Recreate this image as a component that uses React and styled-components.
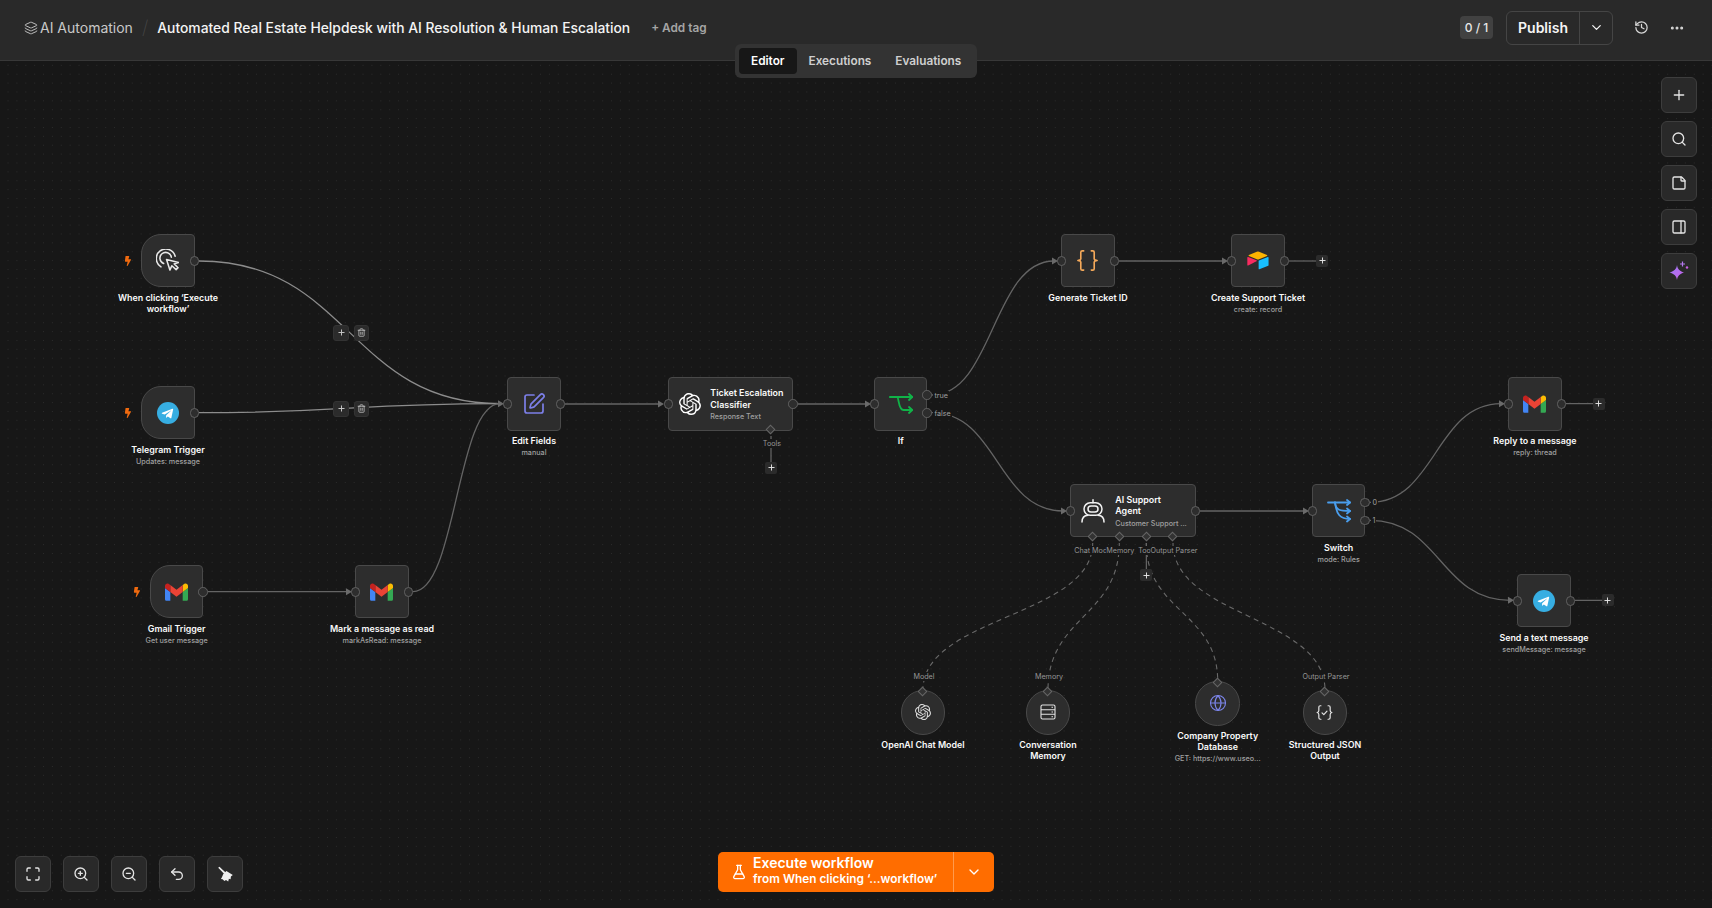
import React from "react";
import styled, { createGlobalStyle } from "styled-components";
import {
    ChevronDown, Ellipsis, FlaskConical, Globe, History, Layers, Maximize, PanelRight,
    Plus, Search, SquarePen, StickyNote, Trash2, Undo2, ZoomIn, ZoomOut,
} from "lucide-react";
import { FaBolt } from "react-icons/fa";
import { SiOpenai } from "react-icons/si";

const GlobalStyle = createGlobalStyle`
    html, body {
        margin: 0;
        height: 100%;
        background: #171717;
        font-family: Inter, "Noto Sans", sans-serif;
    }
    * { box-sizing: border-box; }
`;

const Page = styled.div`
    position: relative;
    display: flex;
    flex-direction: column;
    width: 100%;
    height: 100vh;
    overflow: hidden;
`;

/* top bar */
const Header = styled.header`
    display: flex;
    align-items: center;
    flex-shrink: 0;
    height: 61px;
    padding: 0 27px 5px 24px;
    background: #292929;
    border-bottom: 1px solid #383838;
`;

const Crumb = styled.div`
    display: flex;
    align-items: center;
    gap: 2px;
    color: #c8c8c8;
    font-size: 14px;
`;

const Slash = styled.span`
    margin: 0 9px 0 9px;
    color: #454545;
    font-size: 19px;
    font-weight: 200;
`;

const Title = styled.div`
    color: #f4f4f4;
    font-size: 13.85px;
    font-weight: 500;
    white-space: nowrap;
`;

const AddTag = styled.div`
    margin-left: 21px;
    color: #a5a5a5;
    font-size: 11.8px;
    font-weight: 600;
`;

const HeaderRight = styled.div`
    display: flex;
    align-items: center;
    margin-left: auto;
`;

const Counter = styled.div`
    display: flex;
    align-items: center;
    justify-content: center;
    width: 33px;
    height: 23px;
    margin-right: 13px;
    background: #414141;
    border-radius: 4px;
    color: #e8e8e8;
    font-size: 12px;
    font-weight: 500;
`;

const PublishGroup = styled.div`
    display: flex;
    height: 34px;
    margin-right: 20px;
    border: 1px solid #454545;
    border-radius: 6px;
    color: #f5f5f5;
`;

const PublishButton = styled.div`
    display: flex;
    align-items: center;
    justify-content: center;
    width: 73px;
    border-right: 1px solid #454545;
    font-size: 14px;
    font-weight: 600;
`;

const PublishArrow = styled.div`
    display: flex;
    align-items: center;
    justify-content: center;
    width: 32px;
`;

const HeaderIcon = styled.div`
    display: flex;
    justify-content: center;
    width: 16px;
    margin-left: ${({$gap}) => `${$gap}px`};
    color: #d8d8d8;
`;

const Tabs = styled.nav`
    position: absolute;
    top: 44px;
    left: 735px;
    z-index: 5;
    display: flex;
    height: 34px;
    padding: 4px;
    background: #333333;
    border-radius: 6px;
`;

const Tab = styled.div`
    display: flex;
    align-items: center;
    padding: 0 12px;
    border-radius: 4px;
    background: ${({$active}) => ($active ? "#171717" : "transparent")};
    color: ${({$active}) => ($active ? "#ffffff" : "#cfcfcf")};
    font-size: 11.8px;
    font-weight: 600;
`;

/* canvas */
const Canvas = styled.main`
    flex: 1;
    background-color: #171717;
    background-image: radial-gradient(circle, #2b2b2b 0.7px, transparent 0.9px);
    background-size: 8.89px 8.89px;
    background-position: 3.6px -0.1px;
`;

const Graph = styled.div`
    position: absolute;
    inset: 0;
`;

const Wires = styled.svg`
    position: absolute;
    top: 0;
    left: 0;
`;

const NodeWrap = styled.div`
    position: absolute;
    left: ${({$x}) => `${$x}px`};
    top: ${({$y}) => `${$y}px`};
    display: flex;
    align-items: center;
    width: ${({$w}) => `${$w}px`};
    height: ${({$h}) => `${$h}px`};
    background: #2d2d2d;
    border: 1px solid #494949;
    border-radius: ${({$kind}) =>
        $kind === "trigger" ? "20px 4px 4px 20px" : $kind === "config" ? "50%" : "4px"};
    justify-content: ${({$kind}) => ($kind === "wide" ? "flex-start" : "center")};
    padding-left: ${({$kind}) => ($kind === "wide" ? "10px" : "0")};
    color: #ececec;
`;

const WideText = styled.div`
    display: flex;
    flex-direction: column;
    margin-left: ${({$gap}) => `${$gap}px`};
    padding-top: 2px;
    width: ${({$w}) => `${$w}px`};
    color: #fafafa;
    font-size: 8.9px;
    font-weight: 600;
    line-height: 11.5px;
    & > span {
        margin-top: 1px;
        color: #a0a0a0;
        font-size: 7.2px;
        font-weight: 500;
        white-space: nowrap;
    }
`;

const Label = styled.div`
    position: absolute;
    top: calc(100% + ${({$gap}) => `${$gap}px`});
    left: 50%;
    width: ${({$w}) => `${$w}px`};
    transform: translateX(-50%);
    color: #fafafa;
    font-size: 8.9px;
    font-weight: 600;
    line-height: 11px;
    text-align: center;
    & > span {
        display: block;
        margin-top: 1px;
        color: #a0a0a0;
        font-size: 7.2px;
        font-weight: 500;
        white-space: nowrap;
    }
`;

const Port = styled.div`
    position: absolute;
    top: ${({$top}) => `${$top}px`};
    ${({$side}) => $side}: -5.5px;
    width: 9.5px;
    height: 9.5px;
    margin-top: -5.5px;
    background: #2d2d2d;
    border: 1px solid #626262;
    border-radius: 50%;
`;

const PortText = styled.div`
    position: absolute;
    top: ${({$top}) => `${$top}px`};
    left: calc(100% + 7px);
    margin-top: -5px;
    padding: 0 1px;
    background: #171717;
    color: #a0a0a0;
    font-size: 7.2px;
    line-height: 9px;
`;

const Diamond = styled.div`
    position: absolute;
    left: ${({$left}) => `${$left}px`};
    top: ${({$top}) => $top};
    width: 7px;
    height: 7px;
    margin: -3.5px 0 0 -4.5px;
    background: #333333;
    border: 1px solid #666666;
    transform: rotate(45deg);
`;

const SlotText = styled.div`
    position: absolute;
    left: ${({$left}) => `${$left}px`};
    top: ${({$top}) => `${$top}px`};
    transform: translateX(-50%);
    background: #171717;
    color: #969696;
    font-size: 7.2px;
    line-height: 9px;
    white-space: nowrap;
`;

const Bolt = styled.div`
    position: absolute;
    top: 50%;
    left: -19px;
    display: flex;
    margin-top: -5px;
    color: #f06a0f;
`;

const AddStub = styled.div`
    position: absolute;
    left: ${({$x}) => `${$x}px`};
    top: ${({$y}) => `${$y}px`};
    display: flex;
    align-items: center;
    justify-content: center;
    width: 12px;
    height: 12px;
    background: #2b2b2b;
    border-radius: 2px;
    color: #e6e6e6;
`;

const EdgeTools = styled.div`
    position: absolute;
    left: ${({$x}) => `${$x}px`};
    top: ${({$y}) => `${$y}px`};
    display: flex;
    gap: 5px;
`;

const EdgeTool = styled.div`
    display: flex;
    align-items: center;
    justify-content: center;
    width: 15.5px;
    height: 15.5px;
    background: #2b2b2b;
    border: 1px solid #333333;
    border-radius: 3px;
    color: #cccccc;
`;

/* overlay controls */
const SideTools = styled.aside`
    position: absolute;
    top: 77px;
    right: 15px;
    display: flex;
    flex-direction: column;
    gap: 8px;
`;

const BottomTools = styled.div`
    position: absolute;
    left: 15px;
    bottom: 16px;
    display: flex;
    gap: 12px;
`;

const ToolButton = styled.div`
    display: flex;
    align-items: center;
    justify-content: center;
    width: 36px;
    height: 36px;
    background: #292929;
    border: 1px solid #3d3d3d;
    border-radius: 6px;
    color: #e4e4e4;
`;

const ExecuteBar = styled.div`
    position: absolute;
    left: 718px;
    bottom: 16px;
    display: flex;
    width: 276px;
    height: 40px;
    background: #ff6d00;
    border-radius: 5px;
    color: #ffffff;
`;

const ExecuteMain = styled.div`
    display: flex;
    align-items: center;
    flex: 1;
    gap: 6px;
    padding-left: 13px;
    border-right: 1px solid #ff9a4d;
`;

const ExecuteText = styled.div`
    display: flex;
    flex-direction: column;
    padding-bottom: 3px;
    font-size: 14px;
    font-weight: 600;
    line-height: 17px;
    & > span {
        font-size: 11.85px;
        font-weight: 600;
        line-height: 16px;
    }
`;

const ExecuteArrow = styled.div`
    display: flex;
    align-items: center;
    justify-content: center;
    width: 40px;
`;

/* drawn icons */
function GmailIcon() {
    return (
        <svg width="23" height="18" viewBox="0 0 52 40">
            <path fill="#4285f4" d="M3.6 40h8.4V20L0 11v25.4C0 38.4 1.6 40 3.6 40" />
            <path fill="#34a853" d="M40 40h8.4c2 0 3.6-1.6 3.6-3.6V11L40 20" />
            <path fill="#fbbc04" d="M40 4.4V20l12-9V6.2c0-4.5-5.1-7-8.6-4.4" />
            <path fill="#ea4335" d="M12 20V4.4L26 15 40 4.4V20L26 30.5" />
            <path fill="#c5221f" d="M0 6.2V11l12 9V4.4L8.6 1.8C5.1-.8 0 1.7 0 6.2" />
        </svg>
    );
}

function TelegramIcon() {
    return (
        <svg width="22" height="22" viewBox="0 0 24 24">
            <circle cx="12" cy="12" r="12" fill="#37aee2" />
            <path
                fill="#ffffff"
                d="M5.5 11.8 16.8 7.4c.5-.2 1 .1.8.9l-1.9 9c-.1.6-.5.8-1 .5l-2.9-2.1-1.4 1.3c-.2.2-.3.3-.6.3l.2-2.9 5.3-4.8c.2-.2 0-.3-.3-.1l-6.6 4.1-2.8-.9c-.6-.2-.6-.6.1-.9z"
            />
        </svg>
    );
}

function CursorIcon() {
    return (
        <svg width="23" height="23" viewBox="0 0 24 24" fill="none" stroke="#e8e8e8" strokeWidth="1.6" strokeLinecap="round" strokeLinejoin="round">
            <path d="M5.2 18.6A10 10 0 1 1 20 7.5" />
            <path d="M8 15.2A6 6 0 1 1 16 8.5" />
            <path d="M11 11l3.5 11 2-4.5 4.5 4 2-2-4-4 4.5-1.5z" />
        </svg>
    );
}

function IfIcon() {
    return (
        <svg width="24" height="24" viewBox="0 0 24 24" fill="none" stroke="#10b348" strokeWidth="1.8" strokeLinecap="round" strokeLinejoin="round">
            <path d="M.8 5H23" />
            <path d="M20 2l3.2 3-3.2 3" />
            <path d="M8 5c2 0 1.2 13 6.5 13H23" />
            <path d="M20 15l3.2 3-3.2 3" />
        </svg>
    );
}

function SwitchIcon() {
    return (
        <svg width="24" height="24" viewBox="0 0 24 24" fill="none" stroke="#4a9eed" strokeWidth="1.8" strokeLinecap="round" strokeLinejoin="round">
            <path d="M1 3.5H23" />
            <path d="M20 1l3 2.5-3 2.5" />
            <path d="M8 3.5c1 8 5 8.500 15 8.500" />
            <path d="M20 9.500l3 2.500-3 2.500" />
            <path d="M8 3.500c1.500 12 5 16.500 15 16.500" />
            <path d="M20 17.500l3 2.500-3 2.500" />
        </svg>
    );
}

function BracesIcon() {
    return (
        <svg width="23" height="23" viewBox="0 0 24 24" fill="none" stroke="#f4a95a" strokeWidth="1.7" strokeLinecap="round" strokeLinejoin="round">
            <path d="M8 2H6.500A1.500 1.500 0 0 0 5 3.500V9a2.500 2.500 0 0 1-3 3 2.500 2.500 0 0 1 3 3v5.500A1.500 1.500 0 0 0 6.500 22H8" />
            <path d="M16 2h1.500A1.500 1.500 0 0 1 19 3.500V9a2.500 2.500 0 0 0 3 3 2.500 2.500 0 0 0-3 3v5.500a1.500 1.500 0 0 1-1.500 1.500H16" />
        </svg>
    );
}

function AirtableIcon() {
    return (
        <svg width="24" height="21" viewBox="0 0 200 170">
            <path fill="#fcb400" d="M90.039 12.368 24.079 39.66c-3.667 1.519-3.63 6.729.062 8.192l66.235 26.266a24.58 24.58 0 0 0 18.12 0l66.236-26.266c3.69-1.463 3.729-6.673.06-8.191l-65.958-27.293a24.58 24.58 0 0 0-18.795 0" />
            <path fill="#18bfff" d="M105.312 88.46v65.617c0 3.12 3.147 5.258 6.048 4.108l73.806-28.648a4.42 4.42 0 0 0 2.79-4.108V59.813c0-3.121-3.147-5.258-6.048-4.108l-73.806 28.648a4.42 4.42 0 0 0-2.79 4.108" />
            <path fill="#f82b60" d="M88.078 91.846l-21.904 10.576-2.224 1.075-46.238 22.155c-2.93 1.414-6.672-.722-6.672-3.978V60.088c0-1.178.604-2.195 1.414-2.96a5 5 0 0 1 1.12-.84c1.104-.663 2.68-.84 4.02-.31l70.117 27.782c3.564 1.414 3.844 6.408.367 8.086" />
        </svg>
    );
}

function RobotIcon() {
    return (
        <svg width="24" height="24" viewBox="0 0 24 24" fill="none" stroke="#f2f2f2" strokeWidth="1.5" strokeLinecap="round">
            <path d="M12 .8v3" />
            <rect x="3" y="3.800" width="18" height="12.500" rx="6.200" />
            <rect x="7" y="7" width="10" height="6" rx="3" />
            <path d="M1 23c0-4 2.500-6.500 6-6.700" />
            <path d="M23 23c0-4-2.500-6.500-6-6.700" />
        </svg>
    );
}

function MemoryIcon() {
    return (
        <svg width="16" height="16" viewBox="0 0 16 16" fill="none" stroke="#e4e4e4" strokeWidth="1.100">
            <rect x="1" y="1" width="14" height="14" rx="1.500" />
            <path d="M1 5.700h14M1 10.300h14" />
            <path d="M11.500 3.300h1.500M11.500 8h1.500M11.500 12.700h1.500" />
        </svg>
    );
}

function JsonIcon() {
    return (
        <svg width="17" height="17" viewBox="0 0 24 24" fill="none" stroke="#e4e4e4" strokeWidth="1.700" strokeLinecap="round" strokeLinejoin="round">
            <path d="M7 2.500H6a2 2 0 0 0-2 2V9a3 3 0 0 1-2.500 3A3 3 0 0 1 4 15v4.500a2 2 0 0 0 2 2h1" />
            <path d="M17 2.500h1a2 2 0 0 1 2 2V9a3 3 0 0 0 2.500 3A3 3 0 0 0 20 15v4.500a2 2 0 0 1-2 2h-1" />
            <path d="M8.500 12.500l2.500 2.500 4.500-5" />
        </svg>
    );
}

function SparkleIcon() {
    return (
        <svg width="20" height="20" viewBox="0 0 20 20">
            <defs>
                <linearGradient id="spark" x1="0" y1="0" x2="1" y2="1">
                    <stop offset="0" stopColor="#9b7cf6" />
                    <stop offset="1" stopColor="#c85fe6" />
                </linearGradient>
            </defs>
            <path fill="url(#spark)" d="M8 4c.6 4 2.600 6 7 7.500-4.400 1.500-6.400 3.500-7 7.500-.6-4-2.600-6-7.500-7.500C5.400 10 7.400 8 8 4z" />
            <path stroke="#b57af0" strokeWidth="1.200" d="M13.500 0.500v5M11 3h5" />
            <circle cx="18" cy="6.500" r="1.200" fill="#c85fe6" />
        </svg>
    );
}

function BroomIcon() {
    return (
        <svg width="16" height="16" viewBox="0 0 16 16" fill="#f0f0f0">
            <path d="M1.200 1.800 2.400.8 8.600 6.600 7.300 8z" />
            <path d="M6.300 7.900 9.400 5.100 15.800 9 13.900 10.500 13.600 13.200 11.900 12.700 11.200 15.600 9 14 7.400 15 5.600 13.300 3.900 13 4.800 11.400z" />
        </svg>
    );
}

const AddIcon = () => <Plus size={9} strokeWidth={2.5} />;

/* graph data, in page coordinates */
const SIZE = 53.4;

const nodes = [
    { x: 141.3, y: 234, kind: "trigger", icon: <CursorIcon />, title: "When clicking ‘Execute workflow’" },
    { x: 141.3, y: 386, kind: "trigger", icon: <TelegramIcon />, title: "Telegram Trigger", sub: "Updates: message" },
    { x: 150, y: 565, kind: "trigger", icon: <GmailIcon />, title: "Gmail Trigger", sub: "Get user message" },
    { x: 355.3, y: 565, icon: <GmailIcon />, title: "Mark a message as read", sub: "markAsRead: message" },
    { x: 507.3, y: 377.3, icon: <SquarePen size={24} color="#7c7fe8" strokeWidth={1.7} />, title: "Edit Fields", sub: "manual" },
    {
        x: 668.3, y: 377.3, kind: "wide", width: 125, textWidth: 78, textGap: 9, icon: <SiOpenai size={22} color="#ffffff" />,
        title: "Ticket Escalation Classifier", sub: "Response Text", slotTop: 7,
        slots: [{ left: 102.7, text: "Tools" }],
    },
    {
        x: 874, y: 377.3, icon: <IfIcon />, title: "If",
        outputs: [{ top: 17.7, text: "true" }, { top: 35.4, text: "false" }],
    },
    { x: 1061.3, y: 234, icon: <BracesIcon />, title: "Generate Ticket ID" },
    { x: 1231.3, y: 234, icon: <AirtableIcon />, title: "Create Support Ticket", sub: "create: record" },
    {
        x: 1070.3, y: 484, kind: "wide", width: 125.4, textWidth: 60, textGap: 10, icon: <RobotIcon />,
        title: "AI Support Agent", sub: "Customer Support ...", slotTop: 8,
        slots: [
            { left: 22.4, text: "Chat Model" },
            { left: 49, text: "Memory" },
            { left: 76, text: "Tools" },
            { left: 102.7, text: "Output Parser" },
        ],
    },
    {
        x: 1312, y: 484, icon: <SwitchIcon />, title: "Switch", sub: "mode: Rules",
        outputs: [{ top: 18, text: "0" }, { top: 36, text: "1" }],
    },
    { x: 1508.3, y: 377.3, icon: <GmailIcon />, title: "Reply to a message", sub: "reply: thread" },
    { x: 1517.3, y: 574, icon: <TelegramIcon />, title: "Send a text message", sub: "sendMessage: message" },
];

const configs = [
    { x: 900.7, y: 690, icon: <SiOpenai size={16} color="#dcdcdc" />, title: "OpenAI Chat Model", slot: "Model" },
    { x: 1025.7, y: 690, icon: <MemoryIcon />, title: "Conversation Memory", slot: "Memory" },
    { x: 1195.4, y: 681, icon: <Globe size={18} color="#7c85ea" strokeWidth={1.5} />, title: "Company Property Database", sub: "GET: https://www.useo..." },
    { x: 1302.7, y: 690, icon: <JsonIcon />, title: "Structured JSON Output", slot: "Output Parser" },
];

function curve(x1, y1, x2, y2) {
    const dx = Math.abs(x2 - x1) / 2;
    return `M${x1} ${y1}C${x1 + dx} ${y1} ${x2 - dx} ${y2} ${x2} ${y2}`;
}

function drop(x1, y1, x2, y2) {
    const dy = Math.abs(y2 - y1) / 2;
    return `M${x1} ${y1}C${x1} ${y1 + dy} ${x2} ${y2 - dy} ${x2} ${y2}`;
}

const edges = [
    { d: curve(199, 261, 500, 403.7), bright: true },
    { d: curve(199, 412.7, 500, 403.7), bright: true },
    { d: curve(208, 591.7, 348, 591.7) },
    { d: curve(413, 591.7, 500, 403.7) },
    { d: curve(565, 404, 660, 404) },
    { d: curve(798, 404, 867, 404) },
    { d: curve(932, 395, 1054, 261) },
    { d: curve(932, 412.7, 1063, 511) },
    { d: curve(1119, 261, 1224, 261) },
    { d: curve(1200, 511, 1305, 511) },
    { d: curve(1370, 502.3, 1501, 403.7) },
    { d: curve(1370, 520.3, 1510, 600.3) },
];

const arrows = [
    [500, 403.7], [348, 591.7], [660, 404], [867, 404], [1054, 261], [1224, 261],
    [1063, 511], [1305, 511], [1501, 403.7], [1510, 600.3],
];

const stubs = [
    "M771 436V462", "M1146.300 543V569",
    "M1289 261H1316", "M1566 403.700H1593", "M1575 600.300H1602",
];

const dashed = [
    drop(1092.700, 543, 923, 690),
    drop(1119.300, 543, 1048, 690),
    drop(1146.300, 543, 1217.700, 681),
    drop(1173, 543, 1325, 690),
];

const addStubs = [
    [765, 461.700], [1140.300, 569], [1316, 254.700], [1592.700, 397.700], [1601.700, 594.300],
];

function Node({ x, y, kind, width = SIZE, textWidth, textGap, icon, title, sub, outputs, slots, slotTop }) {
    const wide = kind === "wide";
    const out = outputs || [{ top: SIZE / 2 }];
    return (
        <NodeWrap $x={x} $y={y} $w={width} $h={SIZE} $kind={kind}>
            {kind === "trigger" ? (
                <Bolt><FaBolt size={10} /></Bolt>
            ) : (
                <Port $side="left" $top={SIZE / 2} />
            )}
            {icon}
            {wide && <WideText $w={textWidth} $gap={textGap}>{title}<span>{sub}</span></WideText>}
            {out.map((o) => <Port key={o.top} $side="right" $top={o.top} />)}
            {out.filter((o) => o.text).map((o) => (
                <PortText key={o.text} $top={o.top}>{o.text}</PortText>
            ))}
            {slots && slots.map((s) => <Diamond key={s.text} $left={s.left} $top="100%" />)}
            {slots && slots.map((s) => (
                <SlotText key={s.text} $left={s.left} $top={SIZE + slotTop}>{s.text}</SlotText>
            ))}
            {!wide && (
                <Label $w={125} $gap={5.5}>{title}{sub && <span>{sub}</span>}</Label>
            )}
        </NodeWrap>
    );
}

function ConfigNode({ x, y, icon, title, sub, slot }) {
    return (
        <NodeWrap $x={x} $y={y} $w={44.600} $h={44.600} $kind="config">
            {icon}
            <Diamond $left={22.300} $top="0" />
            {slot && <SlotText $left={22.300} $top={-19}>{slot}</SlotText>}
            <Label $w={88} $gap={5}>{title}{sub && <span>{sub}</span>}</Label>
        </NodeWrap>
    );
}

export default function App() {
    return (
        <Page>
            <GlobalStyle />
            <Header>
                <Crumb><Layers size={14} strokeWidth={1.600} />AI Automation</Crumb>
                <Slash>/</Slash>
                <Title>Automated Real Estate Helpdesk with AI Resolution &amp; Human Escalation</Title>
                <AddTag>+ Add tag</AddTag>
                <HeaderRight>
                    <Counter>0 / 1</Counter>
                    <PublishGroup>
                        <PublishButton>Publish</PublishButton>
                        <PublishArrow><ChevronDown size={15} /></PublishArrow>
                    </PublishGroup>
                    <HeaderIcon $gap={0}><History size={15} /></HeaderIcon>
                    <HeaderIcon $gap={20}><Ellipsis size={16} strokeWidth={2.500} /></HeaderIcon>
                </HeaderRight>
            </Header>
            <Tabs>
                <Tab $active>Editor</Tab>
                <Tab>Executions</Tab>
                <Tab>Evaluations</Tab>
            </Tabs>
            <Canvas />
            <Graph>
                <Wires width="1712" height="908" fill="none">
                    {edges.map((e) => (
                        <path key={e.d} d={e.d} stroke={e.bright ? "#8c8c8c" : "#646464"} strokeWidth="1.300" />
                    ))}
                    {stubs.map((d) => <path key={d} d={d} stroke="#777777" strokeWidth="1" />)}
                    {dashed.map((d) => (
                        <path key={d} d={d} stroke="#6a6a6a" strokeWidth="1.100" strokeDasharray="5 4" />
                    ))}
                    {arrows.map(([x, y]) => (
                        <polygon key={`${x}-${y}`} points={`${x - 2},${y - 3.500} ${x + 4},${y} ${x - 2},${y + 3.500}`} fill="#6a6a6a" />
                    ))}
                </Wires>
                {nodes.map((n) => <Node key={n.title} {...n} />)}
                {configs.map((c) => <ConfigNode key={c.title} {...c} />)}
                {addStubs.map(([x, y]) => <AddStub key={x} $x={x} $y={y}><AddIcon /></AddStub>)}
                <EdgeTools $x={333.300} $y={325}>
                    <EdgeTool><AddIcon /></EdgeTool>
                    <EdgeTool><Trash2 size={9} /></EdgeTool>
                </EdgeTools>
                <EdgeTools $x={333.300} $y={401}>
                    <EdgeTool><AddIcon /></EdgeTool>
                    <EdgeTool><Trash2 size={9} /></EdgeTool>
                </EdgeTools>
            </Graph>
            <SideTools>
                <ToolButton><Plus size={16} /></ToolButton>
                <ToolButton><Search size={16} /></ToolButton>
                <ToolButton><StickyNote size={16} /></ToolButton>
                <ToolButton><PanelRight size={16} /></ToolButton>
                <ToolButton><SparkleIcon /></ToolButton>
            </SideTools>
            <BottomTools>
                <ToolButton><Maximize size={16} /></ToolButton>
                <ToolButton><ZoomIn size={16} /></ToolButton>
                <ToolButton><ZoomOut size={16} /></ToolButton>
                <ToolButton><Undo2 size={16} /></ToolButton>
                <ToolButton><BroomIcon /></ToolButton>
            </BottomTools>
            <ExecuteBar>
                <ExecuteMain>
                    <FlaskConical size={16} />
                    <ExecuteText>Execute workflow<span>from When clicking ‘...workflow’</span></ExecuteText>
                </ExecuteMain>
                <ExecuteArrow><ChevronDown size={16} /></ExecuteArrow>
            </ExecuteBar>
        </Page>
    );
}
